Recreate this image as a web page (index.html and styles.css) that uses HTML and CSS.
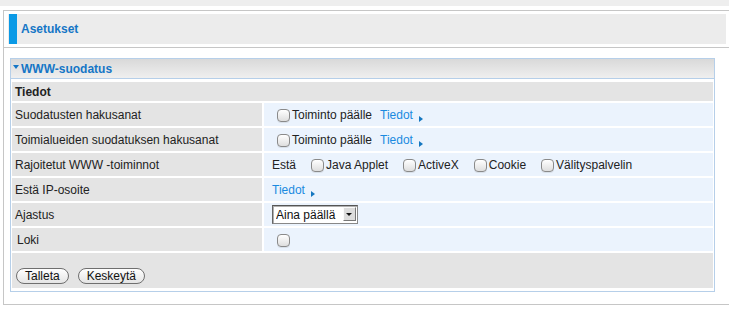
FILE: index.html
```html
<!DOCTYPE html>
<html>
<head>
    <meta charset="UTF-8">
    <title>Asetukset - WWW-suodatus</title>
    <link rel="stylesheet" href="styles.css">
</head>
<body>
    <div class="topbar"></div>
    <div class="page">
        <div class="page-head">
            <div class="page-title"><span class="title-bar"></span>Asetukset</div>
        </div>
        <div class="page-body">
            <div class="panel">
                <div class="panel-head"><span class="caret"></span>WWW-suodatus</div>
                <div class="rows">
                    <div class="section wide">Tiedot</div>

                    <div class="label">Suodatusten hakusanat</div>
                    <div class="value">
                        <label class="check first"><input type="checkbox">Toiminto päälle</label>
                        <a href="#" class="more">Tiedot</a><span class="arrow"></span>
                    </div>

                    <div class="label">Toimialueiden suodatuksen hakusanat</div>
                    <div class="value">
                        <label class="check first"><input type="checkbox">Toiminto päälle</label>
                        <a href="#" class="more">Tiedot</a><span class="arrow"></span>
                    </div>

                    <div class="label">Rajoitetut WWW -toiminnot</div>
                    <div class="value spread">
                        <span>Estä</span>
                        <label class="check"><input type="checkbox">Java Applet</label>
                        <label class="check"><input type="checkbox">ActiveX</label>
                        <label class="check"><input type="checkbox">Cookie</label>
                        <label class="check"><input type="checkbox">Välityspalvelin</label>
                    </div>

                    <div class="label">Estä IP-osoite</div>
                    <div class="value">
                        <a href="#" class="more plain">Tiedot</a><span class="arrow"></span>
                    </div>

                    <div class="label">Ajastus</div>
                    <div class="value">
                        <div class="select">
                            <select>
                                <option>Aina päällä</option>
                                <option>Ajastettu</option>
                            </select>
                        </div>
                    </div>

                    <div class="label indent">Loki</div>
                    <div class="value">
                        <label class="check first"><input type="checkbox"></label>
                    </div>

                    <div class="actions wide">
                        <button class="pill">Talleta</button>
                        <button class="pill">Keskeytä</button>
                    </div>
                </div>
            </div>
        </div>
    </div>
</body>
</html>
```

FILE: styles.css
```css
html, body {
    overflow: hidden;
}
body {
    margin: 0;
    font-family: 'Liberation Sans', Arial, sans-serif;
    font-size: 12px;
    color: #222;
    background: #fff;
}
.topbar {
    height: 6px;
    background: #eeeeee;
}
.page {
    margin: 4px 0 0 3px;
    width: 726px;
    border: 1px solid #c6c6c6;
}
.page-head {
    padding: 3px 4px;
    border-bottom: 1px solid #c6c6c6;
}
.page-title {
    height: 30px;
    background: #ececec;
    display: flex;
    align-items: center;
    font-weight: bold;
    color: #1576c6;
}
.title-bar {
    align-self: stretch;
    width: 8px;
    margin: 0 4px 0 1px;
    background: #0b9ae6;
}
.page-body {
    padding: 10px 0 12px 6px;
}
.panel {
    width: 703px;
    border: 1px solid #b6cfe9;
}
.panel-head {
    height: 19px;
    border-bottom: 1px solid #b6cfe9;
    background: linear-gradient(#d9d9d9, #efefef);
    display: flex;
    align-items: center;
    padding-left: 2px;
    font-weight: bold;
    color: #1576c6;
}
.caret {
    width: 0;
    height: 0;
    border-left: 3px solid transparent;
    border-right: 3px solid transparent;
    border-top: 4px solid #1576c6;
    margin: 0 2px 3px 0;
}
.rows {
    display: grid;
    grid-template-columns: 250px 1fr;
    grid-template-rows: 19px repeat(6, 23px) 35px;
    gap: 2px;
    padding: 3px 1px 3px;
}
.wide {
    grid-column: 1 / 3;
}
.section {
    background: #e4e4e4;
    display: flex;
    align-items: center;
    padding-left: 3px;
    font-weight: bold;
}
.label {
    background: #e4e4e4;
    display: flex;
    align-items: center;
    padding-left: 3px;
}
.label.indent {
    padding-left: 5px;
}
.value {
    background: #ebf3fd;
    display: flex;
    align-items: center;
    padding-left: 8px;
}
.value.spread {
    gap: 15px;
}
.check {
    display: inline-flex;
    align-items: center;
}
.check.first {
    margin-left: 5px;
}
.check input {
    appearance: none;
    -webkit-appearance: none;
    width: 13px;
    height: 13px;
    margin: 1px 2px 0 0;
    border: 1px solid #8a8a8a;
    border-radius: 4px;
    background: linear-gradient(#ffffff, #dedede);
    box-shadow: 0 1px 0 rgba(0, 0, 0, 0.08);
}
.more {
    color: #1a8ae0;
    text-decoration: none;
    margin-left: 8px;
}
.more.plain {
    margin-left: 0;
}
.arrow {
    width: 0;
    height: 0;
    border-top: 3.5px solid transparent;
    border-bottom: 3.5px solid transparent;
    border-left: 4px solid #1577c0;
    margin: 8px 0 0 6px;
}
.select {
    position: relative;
    width: 86px;
    height: 19px;
}
.select select {
    appearance: none;
    -webkit-appearance: none;
    width: 100%;
    height: 100%;
    margin: 0;
    padding: 0 0 0 3px;
    border: 1px solid #888;
    border-top-color: #555;
    border-left-color: #666;
    box-shadow: inset 1px 1px 0 #b0b0b0;
    border-radius: 0;
    background: #fff;
    font-family: 'Liberation Sans', Arial, sans-serif;
    font-size: 12px;
    color: #111;
}
.select::after {
    content: "";
    position: absolute;
    right: 2px;
    top: 2px;
    width: 13px;
    height: 14px;
    box-sizing: border-box;
    border: 1px solid;
    border-color: #fafafa #777 #777 #fafafa;
    background: #dcdcdc;
    pointer-events: none;
}
.select::before {
    content: "";
    position: absolute;
    right: 6px;
    top: 8px;
    width: 0;
    height: 0;
    border-left: 3px solid transparent;
    border-right: 3px solid transparent;
    border-top: 3px solid #111;
    z-index: 1;
    pointer-events: none;
}
.actions {
    background: #e4e4e4;
    display: flex;
    align-items: flex-start;
    gap: 9px;
    padding: 15px 0 0 4px;
}
.pill {
    height: 16px;
    padding: 0 8px;
    border: 1px solid #6f6f6f;
    border-radius: 8px;
    background: linear-gradient(#ffffff, #e4e4e4);
    font-family: 'Liberation Sans', Arial, sans-serif;
    font-size: 12px;
    line-height: 14px;
    color: #111;
}
```
